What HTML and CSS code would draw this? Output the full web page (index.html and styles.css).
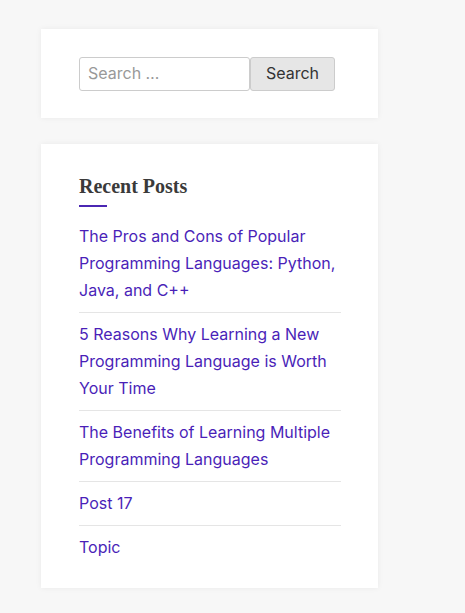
FILE: index.html
```html
<!DOCTYPE html>
<html lang="en">
<head>
  <meta charset="UTF-8" />
  <meta name="viewport" content="width=device-width, initial-scale=1.0"/>
  <title>Sidebar</title>
  <link rel="stylesheet" href="styles.css">
</head>
<body>

  <aside class="sidebar">
    <section class="widget search-widget">
      <form class="search-form" onsubmit="return false;">
        <input type="search" class="search-field" placeholder="Search &hellip;" />
        <button type="submit" class="search-submit">Search</button>
      </form>
    </section>

    <section class="widget recent-posts">
      <h2 class="widget-title">Recent Posts</h2>
      <ul>
        <li><a href="#">The Pros and Cons of Popular Programming Languages: Python, Java, and C++</a></li>
        <li><a href="#">5 Reasons Why Learning a New Programming Language is Worth Your Time</a></li>
        <li><a href="#">The Benefits of Learning Multiple Programming Languages</a></li>
        <li><a href="#">Post 17</a></li>
        <li><a href="#">Topic</a></li>
      </ul>
    </section>
  </aside>

</body>
</html>
```

FILE: styles.css
```css
body {
  font-family: Inter, 'Liberation Sans', sans-serif;
  background: #f7f7f7;
  margin: 0;
  padding: 29px 0 0 41px;
}

.sidebar {
  width: 337px;
}

.widget {
  background: white;
  padding: 28px 37px 27px 38px;
  margin-bottom: 26px;
  box-shadow: 0 0 6px rgba(0,0,0,0.06);
}

.search-form {
  display: flex;
}

.search-field {
  width: 171px;
  height: 34px;
  box-sizing: border-box;
  padding: 3px 8px 5px;
  border: 1px solid #ccc;
  border-radius: 3px;
  font-family: inherit;
  font-size: 16px;
  color: #333;
  outline: none;
}

.search-field::placeholder {
  color: #999;
}

.search-submit {
  width: 85px;
  height: 34px;
  box-sizing: border-box;
  padding: 0 0 2px;
  border: 1px solid #ccc;
  border-radius: 3px;
  background: #e6e6e6;
  color: #333;
  font-family: inherit;
  font-size: 16px;
  cursor: pointer;
}

.recent-posts {
  padding-top: 30px;
  padding-bottom: 27px;
}

.widget-title {
  font-family: 'Liberation Serif', serif;
  font-size: 20px;
  font-weight: bold;
  color: #3a3a3a;
  margin: 0 0 16px;
  line-height: 24px;
}

.widget-title::after {
  content: "";
  display: block;
  width: 28px;
  height: 2px;
  background: #4b27b3;
  margin-top: 7px;
}

.recent-posts ul {
  list-style: none;
  margin: 0;
  padding: 0;
}

.recent-posts li {
  padding: 8px 0;
  border-top: 1px solid #e5e5e5;
  font-size: 16px;
  line-height: 27px;
}

.recent-posts li:first-child {
  border-top: none;
  padding-top: 0;
}

.recent-posts li:last-child {
  padding-bottom: 0;
}

.recent-posts a {
  color: #4a1fb8;
  text-decoration: none;
}
```
